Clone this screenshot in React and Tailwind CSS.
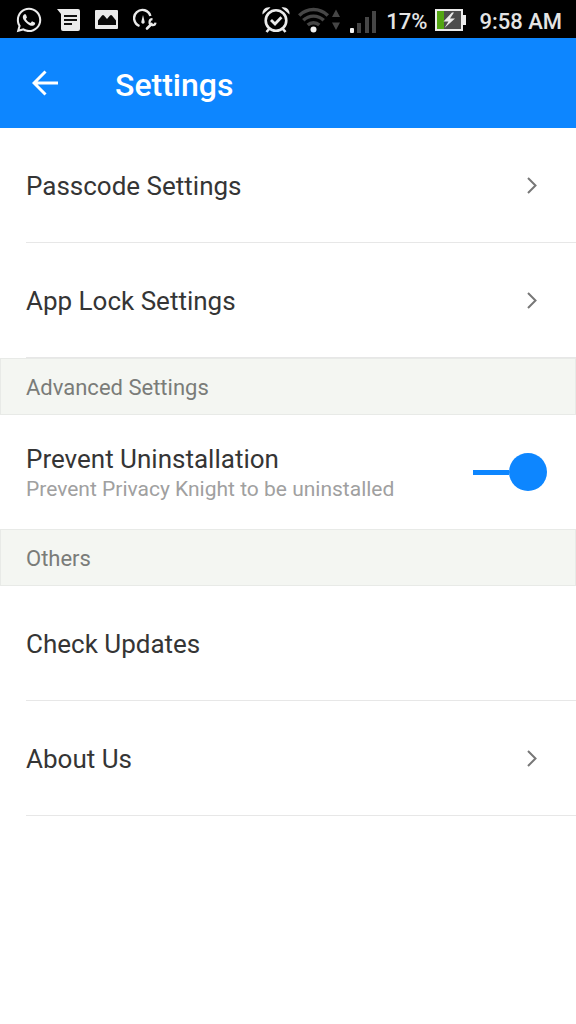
import { FaWhatsapp } from "react-icons/fa";

function MessageIcon() {
  return (
    <svg className="h-6 w-6" viewBox="0 0 24 24" fill="none" aria-hidden="true">
      <path d="M0 1h21a2 2 0 0 1 2 2v18a2 2 0 0 1-2 2H6a2 2 0 0 1-2-2V6z" fill="#ebebeb" />
      <path d="M7 8h13M7 12h13M7 16h8" stroke="#111" strokeWidth="2" />
    </svg>
  );
}

function PictureIcon() {
  return (
    <svg className="h-5 w-6" viewBox="0 0 24 20" aria-hidden="true">
      <rect x="0" y="0" width="23" height="19" rx="1" fill="#ebebeb" />
      <path d="M3 15V10.500l4-5q1-1 2 0l3 3.500 3-3.500q1-1 2 0l4 5V15z" fill="#0a0a0a" />
    </svg>
  );
}

function GaugeIcon() {
  return (
    <svg className="h-6 w-6" viewBox="0 0 24 24" fill="none" aria-hidden="true">
      <path d="M6.500 18A8.300 8.300 0 1 1 17.400 8" stroke="#ebebeb" strokeWidth="2.4" />
      <path d="M10 7l1.600 6.500a1.700 1.700 0 1 1-3.200 0z" fill="#ebebeb" />
      <path d="M14 20.500l4.500-4.500" stroke="#ebebeb" strokeWidth="2.6" strokeLinecap="round" />
      <path d="M19.500 11.200a3 3 0 1 0 3 3.400" stroke="#ebebeb" strokeWidth="2.2" />
    </svg>
  );
}

function AlarmIcon() {
  return (
    <svg className="h-7 w-7" viewBox="0 0 28 28" fill="none" stroke="#ebebeb" aria-hidden="true">
      <circle cx="14" cy="14.5" r="10.300" strokeWidth="2.6" />
      <path d="M9 14l4 4 6.400-6.800" strokeWidth="2.8" />
      <path d="M7.500 22.500L4.500 26M20.500 22.500l3 3.500" strokeWidth="2.6" />
      <path d="M.5 8.500C0 4 3.500.5 8.500 1.500zM27.500 8.500c.5-4.500-3-8-8-7z" fill="#ebebeb" stroke="none" />
    </svg>
  );
}

function WifiIcon() {
  return (
    <svg className="h-7 w-11" viewBox="0 0 44 28" fill="none" stroke="#464646" strokeWidth="3.400" aria-hidden="true">
      <path d="M1.200 9.500a20 20 0 0 1 28.600 0" />
      <path d="M5.300 14.300a14.500 14.500 0 0 1 20.400 0" />
      <path d="M9.700 19a8.500 8.500 0 0 1 11.600 0" />
      <circle cx="15.500" cy="23.500" r="3" fill="#f2f2f2" stroke="none" />
      <path d="M34 11l4-7.500 4 7.500zM34 16.500l4 7.500 4-7.500z" fill="#464646" stroke="none" />
    </svg>
  );
}

function SignalIcon() {
  return (
    <svg className="h-7 w-7" viewBox="0 0 28 28" fill="#464646" aria-hidden="true">
      <rect x="0" y="22" width="4" height="5" rx="1" fill="#f2f2f2" />
      <rect x="7" y="17" width="4" height="10" />
      <rect x="15" y="11" width="4" height="16" />
      <rect x="22" y="5" width="4" height="22" />
    </svg>
  );
}

function BatteryIcon() {
  return (
    <svg className="h-6 w-8" viewBox="0 0 32 24" aria-hidden="true">
      <rect x="1" y="2" width="26" height="20" fill="#4c4c4c" />
      <rect x="2" y="3" width="7" height="18" fill="#52a512" />
      <rect x="1" y="2" width="26" height="20" fill="none" stroke="#ebebeb" strokeWidth="2" />
      <path d="M28 7h3v10h-3z" fill="#ebebeb" />
      <path d="M17 4.500L8.500 13.500h5L9.500 20 20 10.500h-5l4-6z" fill="#ebebeb" />
    </svg>
  );
}

function StatusBar() {
  return (
    <div className="flex h-[38px] items-center justify-between bg-black pt-[2px] pr-[14px] pl-[15px] text-[22px] leading-7 font-medium text-[#e4e4e4]">
      <div className="flex items-center gap-[14px]">
        <FaWhatsapp className="h-7 w-7 text-[#ebebeb]" aria-hidden="true" />
        <MessageIcon />
        <PictureIcon />
        <GaugeIcon />
      </div>
      <div className="flex items-center">
        <AlarmIcon />
        <span className="ml-2"><WifiIcon /></span>
        <span className="ml-2"><SignalIcon /></span>
        <span className="ml-2 pt-1">17%</span>
        <span className="ml-2"><BatteryIcon /></span>
        <span className="ml-3 pt-1">9:58 AM</span>
      </div>
    </div>
  );
}

function Row({ label, chevron = true }) {
  return (
    <li className="pl-[26px]">
      <button
        type="button"
        className="flex h-[115px] w-full items-center justify-between border-b border-[#e7e7e7] pt-[2px] pr-[38px] text-left text-[26px] leading-8 text-[#353535]"
      >
        {label}
        {chevron && (
          <svg className="h-5 w-3" viewBox="0 0 12 20" fill="none" stroke="#777" strokeWidth="2" aria-hidden="true">
            <path d="M2 2l7.500 7.500L2 17" />
          </svg>
        )}
      </button>
    </li>
  );
}

function SectionTitle({ children }) {
  return (
    <h2 className="flex h-[57px] items-center border border-[#e8eae7] bg-[#f4f6f2] px-[25px] pt-[2px] text-[22px] leading-7 text-[#7a7c79]">
      {children}
    </h2>
  );
}

export default function App() {
  return (
    <div className="min-h-screen bg-white font-['Roboto',sans-serif]">
      <StatusBar />
      <header className="flex h-[90px] items-center bg-[#0d86ff] pl-8 text-white">
        <button type="button" aria-label="Back">
          <svg className="h-7 w-7" viewBox="0 0 28 28" fill="none" stroke="currentColor" strokeWidth="3" aria-hidden="true">
            <path d="M26 14H2M13.500 2.500L2 14l11.500 11.500" />
          </svg>
        </button>
        <h1 className="ml-[55px] pt-1 text-[32px] leading-10 font-medium">Settings</h1>
      </header>
      <main>
        <ul>
          <Row label="Passcode Settings" />
          <Row label="App Lock Settings" />
        </ul>
        <SectionTitle>Advanced Settings</SectionTitle>
        <label htmlFor="prevent" className="flex h-[114px] items-center justify-between pr-[29px] pl-[26px]">
          <span className="flex flex-col pt-[2px]">
            <span className="text-[26px] leading-8 text-[#353535]">Prevent Uninstallation</span>
            <span id="prevent-note" className="text-[21px] leading-7 text-[#a0a0a0]">
              Prevent Privacy Knight to be uninstalled
            </span>
          </span>
          <span className="grid items-center">
            <input
              id="prevent"
              type="checkbox"
              role="switch"
              defaultChecked
              aria-describedby="prevent-note"
              className="peer col-start-1 row-start-1 h-10 w-[74px] appearance-none"
            />
            <span className="pointer-events-none col-start-1 row-start-1 flex flex-row-reverse items-center text-[#b5b5b5] peer-checked:flex-row peer-checked:text-[#0d86ff]">
              <span className="h-[5px] grow bg-current" />
              <span className="h-[38px] w-[38px] rounded-full bg-current" />
            </span>
          </span>
        </label>
        <SectionTitle>Others</SectionTitle>
        <ul>
          <Row label="Check Updates" chevron={false} />
          <Row label="About Us" />
        </ul>
      </main>
    </div>
  );
}
